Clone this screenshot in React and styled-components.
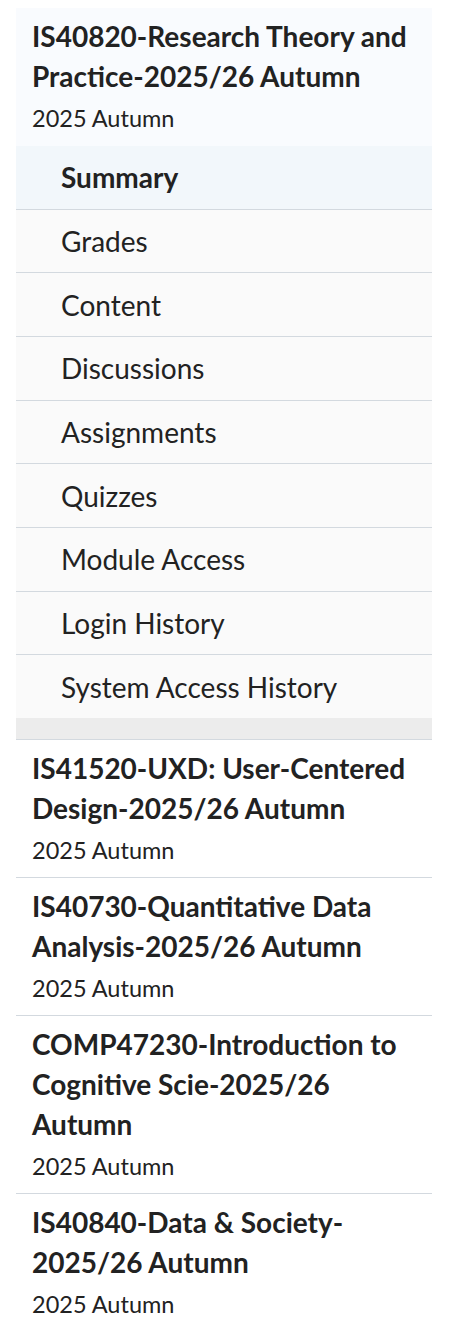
import React from 'react';
import styled, { createGlobalStyle } from 'styled-components';

const GlobalStyle = createGlobalStyle`
  body {
    margin: 0;
    background: #ffffff;
    font-family: Lato, "Open Sans", sans-serif;
    color: #222222;
  }
`

const Wrapper = styled.nav`
  width: 416px;
  padding: 8px 0 0 16px;
`

const CourseBlock = styled.div`
  padding: ${p => (p.active ? '8px 16px 8px' : '8px 16px 7px')};
  background: ${p => (p.active ? '#f9fbfe' : '#ffffff')};
  border-bottom: ${p => (p.last || p.active ? 'none' : '1px solid #d3d9df')};
`

const CourseTitle = styled.div`
  font-size: 28px;
  font-weight: 700;
  line-height: 40px;
  color: #222222;
`

const Term = styled.div`
  margin-top: 2px;
  font-size: 23.5px;
  line-height: 40px;
  color: #222222;
`

const MenuList = styled.ul`
  list-style: none;
  margin: 0;
  padding: 0;
`

const MenuItem = styled.li`
  height: 62.67px;
  display: flex;
  align-items: center;
  padding-left: 45px;
  font-size: 28px;
  font-weight: ${p => (p.selected ? 700 : 400)};
  background: ${p => (p.selected ? '#f2f7fb' : '#fafafa')};
  border-bottom: ${p => (p.lastItem ? 'none' : '1px solid #d3d9df')};
  color: #222222;
`

const Spacer = styled.div`
  height: 21px;
  background: #ececec;
  border-bottom: 1px solid #d3d9df;
`

const menu = [
  'Summary',
  'Grades',
  'Content',
  'Discussions',
  'Assignments',
  'Quizzes',
  'Module Access',
  'Login History',
  'System Access History',
]

const courses = [
  'IS41520-UXD: User-Centered Design-2025/26 Autumn',
  'IS40730-Quantitative Data Analysis-2025/26 Autumn',
  'COMP47230-Introduction to Cognitive Scie-2025/26 Autumn',
  'IS40840-Data & Society-2025/26 Autumn',
]

export default function App() {
  return (
    <>
      <GlobalStyle />
      <Wrapper>
        <CourseBlock active>
          <CourseTitle>IS40820-Research Theory and Practice-2025/26 Autumn</CourseTitle>
          <Term>2025 Autumn</Term>
        </CourseBlock>
        <MenuList>
          {menu.map((m, i) => (
            <MenuItem key={m} selected={i === 0} lastItem={i === menu.length - 1}>
              {m}
            </MenuItem>
          ))}
        </MenuList>
        <Spacer />
        {courses.map((c, i) => (
          <CourseBlock key={c} last={i === courses.length - 1}>
            <CourseTitle>{c}</CourseTitle>
            <Term>2025 Autumn</Term>
          </CourseBlock>
        ))}
      </Wrapper>
    </>
  );
}
